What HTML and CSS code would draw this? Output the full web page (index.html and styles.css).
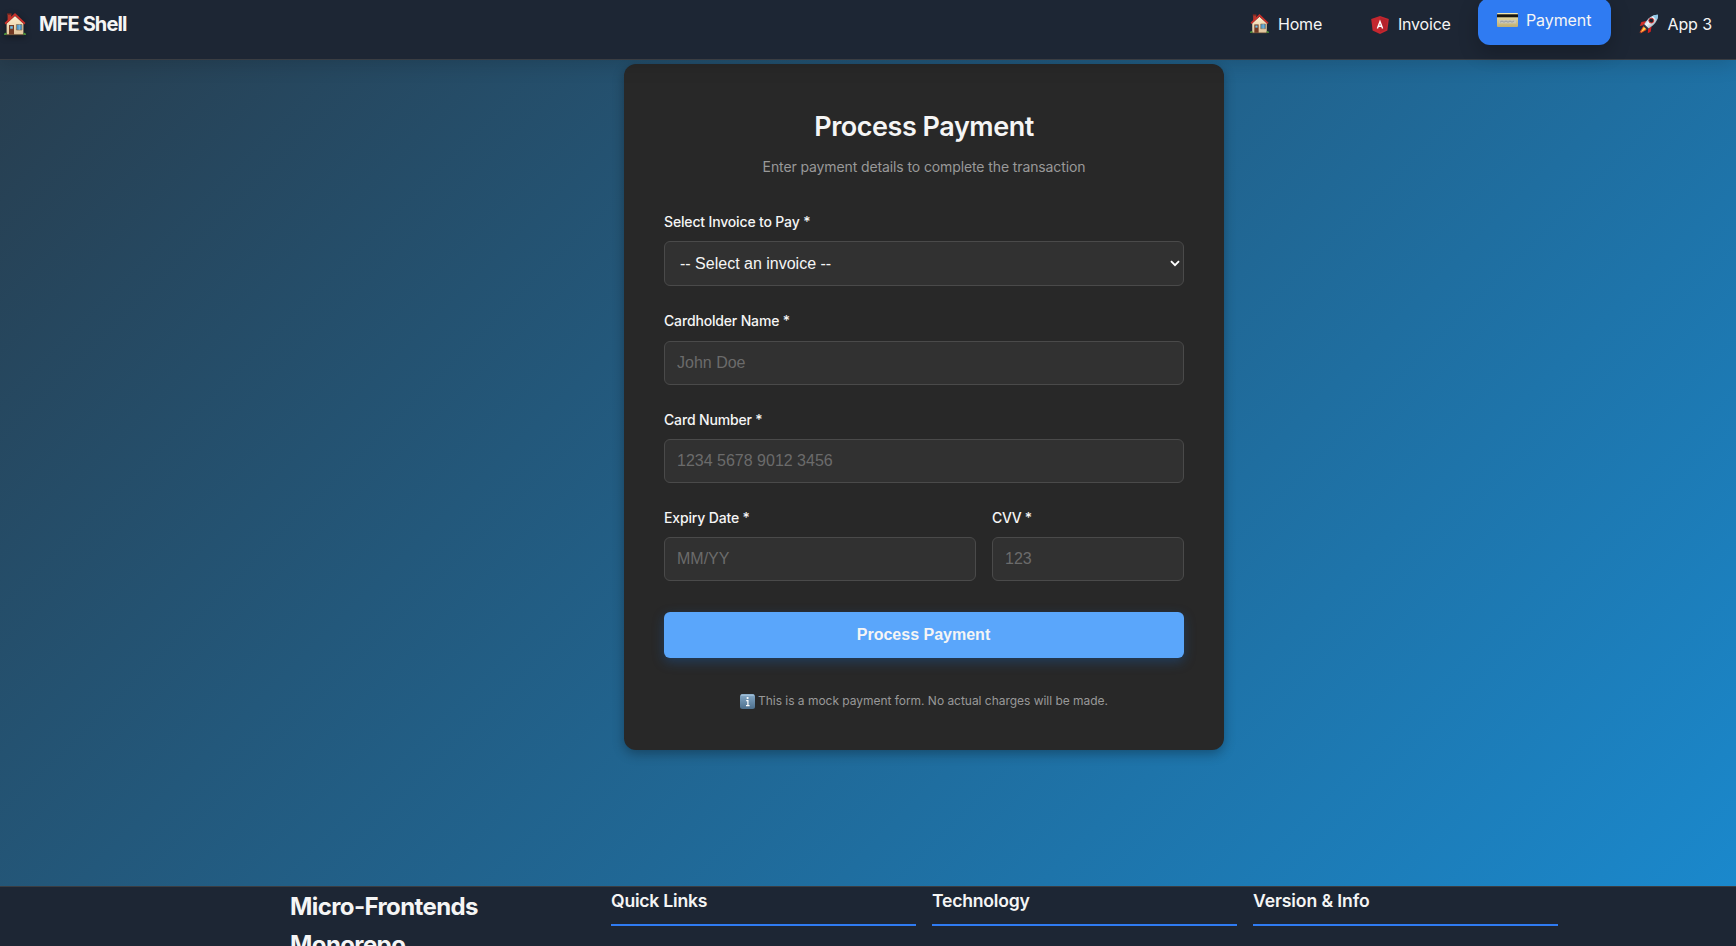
FILE: index.html
```html
<!DOCTYPE html>
<html lang="en">
<head>
<meta charset="utf-8">
<title>MFE Shell</title>
<link rel="stylesheet" href="styles.css">
</head>
<body>
<svg class="defs" aria-hidden="true">
  <defs>
    <linearGradient id="wall" x1="0" y1="0" x2="0" y2="1"><stop offset="0" stop-color="#fff0cf"/><stop offset="1" stop-color="#dfc39a"/></linearGradient>
    <linearGradient id="gold" x1="0" y1="0" x2="0" y2="1"><stop offset="0" stop-color="#f2e7b0"/><stop offset="1" stop-color="#bfae72"/></linearGradient>
    <linearGradient id="hull" x1="0" y1="0" x2="1" y2="1"><stop offset="0" stop-color="#3c8fc4"/><stop offset=".45" stop-color="#f2f7fa"/><stop offset="1" stop-color="#5a7486"/></linearGradient>
    <linearGradient id="tile" x1="0" y1="0" x2="0" y2="1"><stop offset="0" stop-color="#86aac8"/><stop offset="1" stop-color="#4d6f8c"/></linearGradient>
    <symbol id="house" viewBox="0 0 22 23">
      <path d="M3.6 1h3.6v6H3.6z" fill="#b3382c"/><path d="M3.2.4h4.4v1.5H3.2z" fill="#7d2a22"/>
      <path d="M2.6 10.5 11 3l8.4 7.500v11.300H2.600z" fill="url(#wall)"/>
      <path d="M1.2 10.8 11 1.4l9.8 9.4" fill="none" stroke="#c9302a" stroke-width="2"/>
      <path d="M5 12h5v9.8H5z" fill="#743a24"/><path d="M6.2 13.2h2.6v2.5H6.2z" fill="#69bde8"/>
      <path d="M12.4 11.5H18V17h-5.6z" fill="#4a95c8" stroke="#8b6a48" stroke-width=".7"/><path d="M15.2 11.5V17" stroke="#b7dcef" stroke-width=".6"/>
      <path d="M0 22c0-2.5 2-3 3-1.4V22zM22 22c0-2.5-2-3-3-1.4V22z" fill="#4b9139"/><path d="M2 21.7h18" stroke="#6c5036" stroke-width=".8"/>
    </symbol>
  </defs>
</svg>
<header class="header">
  <div class="brand">
    <svg class="brand-icon"><use href="#house"/></svg>
    <span class="brand-name">MFE Shell</span>
  </div>
  <nav class="nav">
    <a class="nav-link home"><svg class="icon-house"><use href="#house"/></svg><span>Home</span></a>
    <a class="nav-link invoice">
      <svg class="icon-shield" viewBox="0 0 18 18"><path d="M9 0 17.8 3 16.4 14.4 9 18 1.6 14.4.2 3z" fill="#c4272f"/><path d="M9 1.5 16.3 4 15 13.5 9 16.4z" fill="#b5222c"/><path d="M6.4 12.400 9 5.400l2.600 7M7.400 10.200h3.200" fill="none" stroke="#fff" stroke-width="1.4"/></svg>
      <span>Invoice</span></a>
    <a class="nav-link payment active">
      <svg class="icon-card" viewBox="0 0 21 14"><rect width="21" height="14" rx="1" fill="url(#gold)"/><path d="M0 1.3h21v3H0z" fill="#17150f"/><path d="M2 7h17v3.4H2z" fill="#c9c7b8"/><path d="M3 9.2 5 8l2 1.2L9 8l2 1.2L13 8l2 1.2L17 8" fill="none" stroke="#8b92a0" stroke-width=".8"/></svg>
      <span>Payment</span></a>
    <a class="nav-link app3">
      <svg class="icon-rocket" viewBox="0 0 20 20"><path d="M7.5 7 2.500 8 .8 12 6 11z" fill="#d32f27"/><path d="m13 12-1 6-3 1.500.5-6z" fill="#d32020"/><path d="m4.500 12-4 6.800 1.500-.4-.5 1.400L8 16z" fill="#ee4f23"/><path d="m5 13-3 5.500L7.200 15z" fill="#ffe14a"/><path d="M19.600.4C14 .5 9.400 3.200 5.300 10.200l4.400 4.400C16.800 10.500 19.500 6 19.600.4z" fill="url(#hull)"/><path d="M19.600.4c-2 0-4 .4-5.600 1.300l4.300 4.300c.9-1.600 1.300-3.600 1.300-5.600z" fill="#8fc4e4"/><circle cx="12.600" cy="6.500" r="2.500" fill="#17242e" stroke="#d82a26"/><path d="m5 10 5 5-1.400.9-4.500-4.400z" fill="#2a3c4a"/></svg>
      <span>App 3</span></a>
  </nav>
</header>
<main class="main">
  <section class="card">
    <h1 class="title">Process Payment</h1>
    <p class="subtitle">Enter payment details to complete the transaction</p>
    <form class="form">
      <div class="field">
        <label class="label" for="invoice">Select Invoice to Pay *</label>
        <div class="select-wrap">
          <select class="control select" id="invoice"><option>-- Select an invoice --</option></select>
          <svg class="chevron" viewBox="0 0 10 7"><path d="m1 1.200 4 4 4-4" fill="none" stroke="#fff" stroke-width="1.900"/></svg>
        </div>
      </div>
      <div class="field">
        <label class="label label-tall" for="holder">Cardholder Name *</label>
        <input class="control" id="holder" placeholder="John Doe">
      </div>
      <div class="field">
        <label class="label" for="number">Card Number *</label>
        <input class="control" id="number" placeholder="1234 5678 9012 3456">
      </div>
      <div class="row">
        <div class="field">
          <label class="label" for="expiry">Expiry Date *</label>
          <input class="control" id="expiry" placeholder="MM/YY">
        </div>
        <div class="field">
          <label class="label label-cvv" for="cvv">CVV *</label>
          <input class="control" id="cvv" placeholder="123">
        </div>
      </div>
      <button class="submit" type="button">Process Payment</button>
    </form>
    <p class="note">
      <svg class="icon-info" viewBox="0 0 15 15"><rect width="15" height="15" rx="2.500" fill="url(#tile)"/><path d="M1 1.200h13" stroke="#a9c6dc"/><circle cx="7.600" cy="4" r="1.100" fill="#fff"/><path d="M6.200 6.600h1.700v5M6 11.600h3.600" fill="none" stroke="#fff" stroke-width="1.200"/></svg>
      <span>This is a mock payment form. No actual charges will be made.</span>
    </p>
  </section>
</main>
<footer class="footer">
  <div class="footer-grid">
    <h2 class="footer-brand">Micro-Frontends<br>Monorepo</h2>
    <h3 class="footer-title">Quick Links</h3>
    <h3 class="footer-title">Technology</h3>
    <h3 class="footer-title version">Version &amp; Info</h3>
  </div>
</footer>
</body>
</html>
```
FILE: styles.css
```css
* { box-sizing: border-box; }

body {
  margin: 0;
  height: 946px;
  overflow: hidden;
  display: flex;
  flex-direction: column;
  font-family: Inter, "Liberation Sans", sans-serif;
  color: #f5f5f5;
  background: linear-gradient(135deg, #283c4c 0%, #1a8acf 100%);
}

h1, h2, h3, p { margin: 0; }

.defs { position: absolute; width: 0; height: 0; }

.header {
  flex: none;
  height: 60px;
  display: flex;
  justify-content: space-between;
  padding: 0 24px 0 4px;
  background: #1d2634;
  border-bottom: 1px solid #3a3d42;
  box-shadow: 0 4px 20px rgba(0, 0, 0, .15);
  position: relative;
  z-index: 1;
}

.brand { display: flex; align-items: center; gap: 13px; height: 48px; }
.brand-icon { width: 22px; height: 23px; margin-top: 1px; filter: drop-shadow(0 2px 3px rgba(0, 0, 0, .4)); }
.brand-name { font-size: 20px; font-weight: 650; letter-spacing: -.9px; line-height: 24px; }

.nav { display: flex; height: 48px; }
.nav-link { display: flex; align-items: center; font-size: 16px; line-height: 24px; letter-spacing: -.2px; white-space: nowrap; }
.home { gap: 9px; width: 121px; }
.invoice { gap: 9px; width: 107px; }
.payment { gap: 8px; width: 133px; height: 47px; margin-top: -2px; padding: 0 0 3px 19px; letter-spacing: -.1px; }
.app3 { gap: 9px; width: 73px; margin-left: 28px; letter-spacing: -.1px; }
.active {
  background: #2f7bf2;
  border-radius: 12px;
  box-shadow: 0 8px 20px rgba(0, 0, 0, .22);
}
.icon-house { width: 19px; height: 20px; }
.icon-shield { width: 18px; height: 18px; margin-top: 2px; }
.icon-card { width: 21px; height: 14px; }
.icon-rocket { width: 20px; height: 20px; }

.main {
  flex: 1;
  padding: 4px 0 0 624px;
}

.card {
  width: 600px;
  height: 686px;
  padding: 40px;
  background: #282828;
  border-radius: 12px;
  box-shadow: 0 4px 12px rgba(0, 0, 0, .3);
}

.title { margin-top: 4px; font-size: 27px; line-height: 37px; font-weight: 600; letter-spacing: -.47px; text-align: center; }
.subtitle { margin-top: 11px; font-size: 14px; line-height: 22px; letter-spacing: -.11px; color: #999; text-align: center; }

.form { display: flex; flex-direction: column; margin-top: 33px; }
.field { display: flex; flex-direction: column; margin-bottom: 24px; min-width: 0; }
.label { height: 30px; font-size: 14px; line-height: 22px; font-weight: 500; letter-spacing: -.16px; }
.label-tall { height: 31px; }
.label-cvv { letter-spacing: -.35px; }
.control {
  width: 100%;
  height: 44px;
  padding: 0 12px 1px;
  font: 16px "Liberation Sans", Arial, sans-serif;
  color: #f5f5f5;
  background: #313131;
  border: 1px solid #4a4a4a;
  border-radius: 6px;
  outline: none;
}
.control::placeholder { color: #6b6b6b; opacity: 1; }
.select-wrap { display: grid; align-items: center; }
.select-wrap > * { grid-area: 1 / 1; }
.select { height: 45px; padding: 0 15px 1px; appearance: none; }
.chevron { width: 10px; height: 7px; justify-self: end; margin-right: 4px; pointer-events: none; }
.row { display: grid; grid-template-columns: 312px 192px; gap: 16px; }

.submit {
  height: 46px;
  margin-top: 7px;
  padding: 0 1px 1px 0;
  border: 0;
  border-radius: 6px;
  background: #5aa6fb;
  color: #f5f5f5;
  font: bold 16px "Liberation Sans", Arial, sans-serif;
  box-shadow: 0 4px 12px rgba(24, 100, 190, .35);
}

.note { display: flex; justify-content: center; align-items: center; gap: 3px; margin-top: 33px; font-size: 12px; line-height: 20px; letter-spacing: -.03px; color: #999; }
.icon-info { width: 15px; height: 15px; }

.footer {
  flex: none;
  height: 60px;
  background: #1d2634;
  border-top: 1px solid #3a3d42;
}
.footer-grid { display: grid; grid-template-columns: repeat(4, 305px); gap: 16px; width: 1268px; margin-left: 290px; }
.footer-brand { margin-top: 1px; font-size: 24px; line-height: 38px; font-weight: 700; letter-spacing: -.6px; }
.footer-title { height: 39px; padding-top: 1px; font-size: 17.6px; line-height: 26px; font-weight: 600; letter-spacing: -.22px; border-bottom: 2px solid #2f7bf2; }
.version { letter-spacing: -.12px; }
```
